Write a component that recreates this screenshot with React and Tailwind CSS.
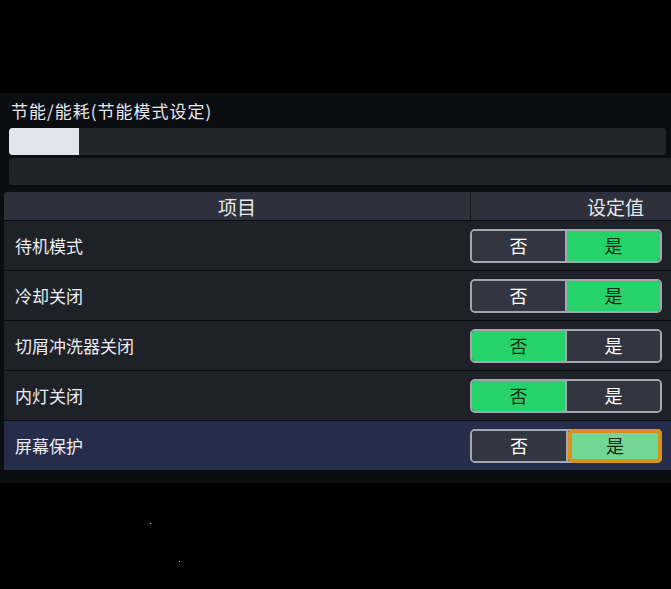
const rows = [
  { label: "待机模式", value: true },
  { label: "冷却关闭", value: true },
  { label: "切屑冲洗器关闭", value: false },
  { label: "内灯关闭", value: false },
  { label: "屏幕保护", value: true, focused: true },
];

const Toggle = ({ value, focused }) => {
  return (
    <div className="flex h-[34px] w-[192px] rounded-[5px] border-2 border-[#a4a7b1] text-[18px]">
      <div
        className={`flex flex-1 items-center justify-center rounded-l-[3px] ${
          !value ? "bg-[#26d36a] text-[#0b2a14]" : "bg-[#333541] text-white"
        }`}
      >
        否
      </div>
      <div className="w-[2px] bg-[#a4a7b1]" />
      <div
        className={`flex flex-1 items-center justify-center ${
          focused
            ? "-my-[2px] -mr-[2px] rounded-[5px] bg-[#74d694] text-[#0b2a14] shadow-[inset_0_0_0_4px_#d8911b]"
            : value
            ? "rounded-r-[3px] bg-[#26d36a] text-[#0b2a14]"
            : "rounded-r-[3px] bg-[#333541] text-white"
        }`}
      >
        是
      </div>
    </div>
  );
};

export default function App() {
  return (
    <div
      className="relative flex h-[589px] w-[671px] flex-col overflow-hidden bg-black"
      style={{ fontFamily: '"Noto Sans CJK SC", "Noto Sans", sans-serif' }}
    >
      <div className="h-[93px]" />

      {/* Main panel */}
      <div className="flex h-[390px] flex-col bg-[#0c0d11]">
        {/* Title */}
        <div className="flex h-[35px] items-center pl-[11px] text-[17px] leading-none tracking-[1px] text-[#e8e9ee]">
          节能/能耗(节能模式设定)
        </div>

        {/* Progress bar */}
        <div className="ml-[9px] mr-[5px] h-[27px] overflow-hidden rounded-[3px] bg-[#22242b]">
          <div className="h-full w-[70px] rounded-l-[3px] bg-[#e2e5ee]" />
        </div>

        {/* Empty info bar */}
        <div className="ml-[9px] mt-[3px] h-[27px] rounded-l-[3px] bg-[#20222a]" />

        {/* Table */}
        <div className="ml-[4px] mt-[7px] flex flex-col gap-px">
          <div className="flex h-[28px] rounded-tl-[3px] bg-[#2e303b] text-[19px] leading-none text-[#e8e9ee]">
            <div className="flex w-[467px] items-center justify-center border-r border-[#16171c]">
              项目
            </div>
            <div className="flex flex-1 items-center pl-[116px]">设定值</div>
          </div>

          {rows.map((row) => (
            <div
              key={row.label}
              className={`flex h-[49px] items-center justify-between pl-[11px] pr-[9px] ${
                row.focused ? "bg-[#262d4a]" : "bg-[#1f2128]"
              }`}
            >
              <span className="text-[17px] leading-none text-[#eceef2]">
                {row.label}
              </span>
              <Toggle value={row.value} focused={row.focused} />
            </div>
          ))}
        </div>
      </div>

      {/* Stray pixels */}
      <span className="absolute left-[150px] top-[523px] h-px w-px bg-white" />
      <span className="absolute left-[179px] top-[561px] h-px w-px bg-white" />
    </div>
  );
}
